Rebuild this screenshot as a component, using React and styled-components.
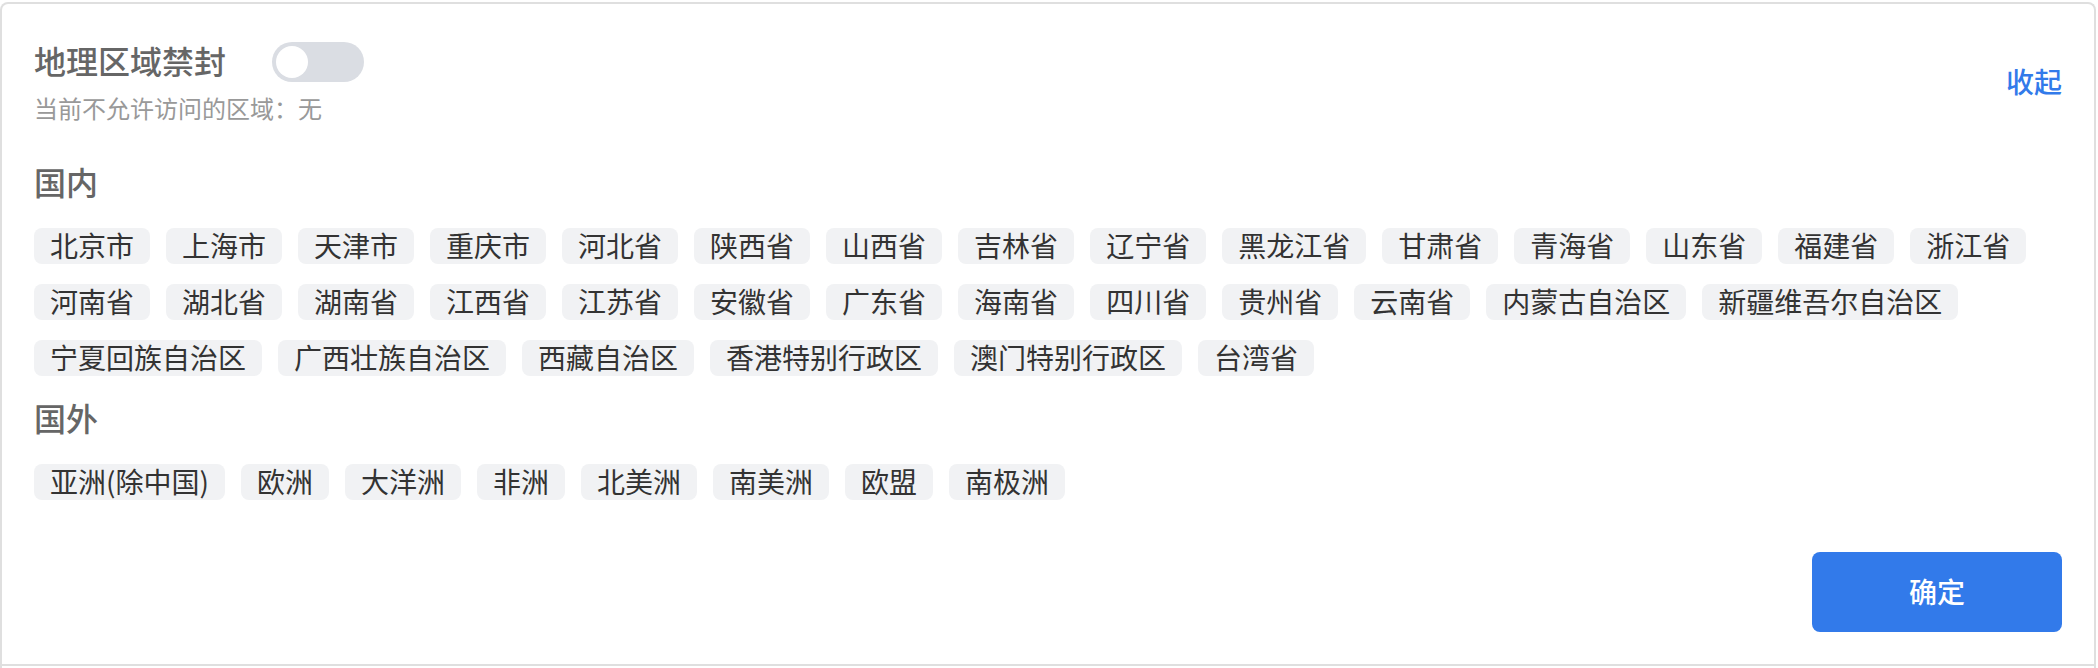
import React, { useState } from 'react';
import styled, { createGlobalStyle } from 'styled-components';

const GlobalStyle = createGlobalStyle`
  * { box-sizing: border-box; }
  body {
    margin: 0;
    background: #fff;
    font-family: "Noto Sans CJK SC", sans-serif;
  }
`;

const Page = styled.main`
  padding: 2px 2px 0 0;
`;

const Panel = styled.div`
  border: 2px solid #dfdfdf;
  border-bottom: 0;
  border-radius: 8px 8px 0 0;
  padding-bottom: 2px;
`;

const Section = styled.section`
  padding: 32px;
  border-bottom: 2px solid #dfdfdf;
`;

const Header = styled.header`
  display: flex;
  align-items: center;
  justify-content: space-between;
`;

const TitleRow = styled.div`
  display: flex;
  align-items: center;
  gap: 46px;
  height: 52px;
`;

const Title = styled.h2`
  margin: 0;
  padding-bottom: 4px;
  font-size: 32px;
  line-height: 48px;
  font-weight: 500;
  color: #666;
`;

const Status = styled.p`
  margin: 0;
  font-size: 24px;
  line-height: 40px;
  color: #999;
`;

const Switch = styled.input`
  appearance: none;
  display: flex;
  width: 92px;
  height: 40px;
  margin: 0;
  padding: 4px;
  border-radius: 20px;
  background: ${({ checked }) => (checked ? '#327aea' : '#dadde3')};
  justify-content: ${({ checked }) => (checked ? 'flex-end' : 'flex-start')};
  cursor: pointer;

  &::before {
    content: "";
    width: 32px;
    height: 32px;
    border-radius: 50%;
    background: #fff;
  }
`;

const TextButton = styled.button`
  padding: 0 0 2px;
  border: 0;
  background: none;
  font-family: inherit;
  font-size: 28px;
  line-height: 40px;
  font-weight: 500;
  color: #327aea;
  cursor: pointer;
`;

const GroupTitle = styled.h3`
  margin: 0;
  padding: 16px 0 22px;
  font-size: 32px;
  line-height: 50px;
  font-weight: 500;
  color: #666;
`;

const Groups = styled.div`
  padding-top: 12px;
`;

const TagList = styled.ul`
  display: flex;
  flex-wrap: wrap;
  gap: 20px 16px;
  margin: 0;
  padding: 0;
  list-style: none;
`;

const Tag = styled.li`
  padding: 0 16px 2px;
  border-radius: 8px;
  background: #f1f2f4;
  font-size: 28px;
  line-height: 34px;
  color: #333;
`;

const Footer = styled.footer`
  display: flex;
  justify-content: flex-end;
  padding-top: 52px;
`;

const PrimaryButton = styled.button`
  width: 250px;
  height: 80px;
  padding: 0 0 2px;
  border: 0;
  border-radius: 8px;
  background: #327aea;
  font-family: inherit;
  font-size: 28px;
  line-height: 40px;
  font-weight: 500;
  color: #fff;
  cursor: pointer;
`;

const GROUPS = [
  {
    name: '国内',
    regions: [
      '北京市', '上海市', '天津市', '重庆市', '河北省', '陕西省', '山西省', '吉林省',
      '辽宁省', '黑龙江省', '甘肃省', '青海省', '山东省', '福建省', '浙江省',
      '河南省', '湖北省', '湖南省', '江西省', '江苏省', '安徽省', '广东省', '海南省',
      '四川省', '贵州省', '云南省', '内蒙古自治区', '新疆维吾尔自治区',
      '宁夏回族自治区', '广西壮族自治区', '西藏自治区', '香港特别行政区',
      '澳门特别行政区', '台湾省',
    ],
  },
  {
    name: '国外',
    regions: ['亚洲(除中国)', '欧洲', '大洋洲', '非洲', '北美洲', '南美洲', '欧盟', '南极洲'],
  },
];

export default function App() {
  const [enabled, setEnabled] = useState(false);

  return (
    <Page>
      <GlobalStyle />
      <Panel>
        <Section>
          <Header>
            <div>
              <TitleRow>
                <Title id="geo-title">地理区域禁封</Title>
                <Switch
                  type="checkbox"
                  role="switch"
                  aria-labelledby="geo-title"
                  checked={enabled}
                  onChange={(event) => setEnabled(event.target.checked)}
                />
              </TitleRow>
              <Status>当前不允许访问的区域：无</Status>
            </div>
            <TextButton type="button">收起</TextButton>
          </Header>
          <Groups>
            {GROUPS.map((group) => (
              <div key={group.name}>
                <GroupTitle>{group.name}</GroupTitle>
                <TagList>
                  {group.regions.map((region) => (
                    <Tag key={region}>{region}</Tag>
                  ))}
                </TagList>
              </div>
            ))}
          </Groups>
          <Footer>
            <PrimaryButton type="button">确定</PrimaryButton>
          </Footer>
        </Section>
      </Panel>
    </Page>
  );
}
